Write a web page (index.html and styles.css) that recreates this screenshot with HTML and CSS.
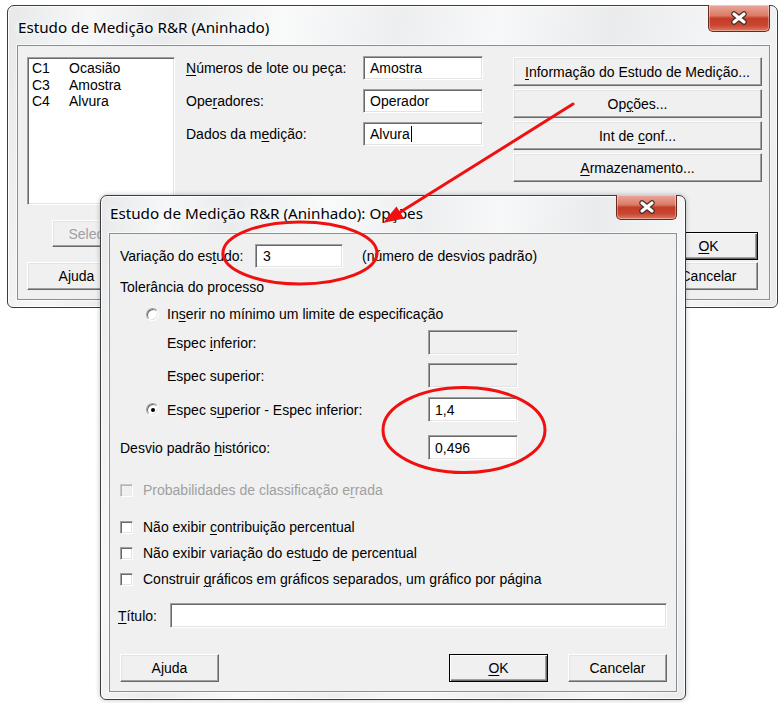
FILE: index.html
```html
<!DOCTYPE html>
<html>
<head>
<meta charset="utf-8">
<title>Estudo de Medição R&amp;R (Aninhado)</title>
<link rel="stylesheet" href="styles.css">
</head>
<body>
<div class="desk">

  <div class="win win-main">
    <div class="titlebar">
      <span class="title">Estudo de Medição R&amp;R (Aninhado)</span>
      <div class="close close-main">
        <svg width="20" height="14" viewBox="0 0 20 14"><path d="M5 3 L15 11 M15 3 L5 11" stroke="#4a2a24" stroke-width="5.5" stroke-linecap="round"/><path d="M5 3 L15 11 M15 3 L5 11" stroke="#fff" stroke-width="3.2" stroke-linecap="round"/></svg>
      </div>
    </div>
    <div class="client client-main">
      <div class="top">
        <div class="listbox">
          <div class="li"><span class="lc">C1</span><span>Ocasião</span></div>
          <div class="li"><span class="lc">C3</span><span>Amostra</span></div>
          <div class="li"><span class="lc">C4</span><span>Alvura</span></div>
        </div>
        <div class="fields">
          <div class="frow"><span class="flabel"><u>N</u>úmeros de lote ou peça:</span><span class="input w120">Amostra</span></div>
          <div class="frow"><span class="flabel">Ope<u>r</u>adores:</span><span class="input w120">Operador</span></div>
          <div class="frow"><span class="flabel">Dados da m<u>e</u>dição:</span><span class="input w120">Alvura<span class="caret"></span></span></div>
        </div>
        <div class="btncol">
          <div class="btn bwide"><span><u>I</u>nformação do Estudo de Medição...</span></div>
          <div class="btn bwide"><span>Op<u>ç</u>ões...</span></div>
          <div class="btn bwide"><span>Int de <u>c</u>onf...</span></div>
          <div class="btn bwide"><span><u>A</u>rmazenamento...</span></div>
        </div>
      </div>
      <div class="bottom">
        <div class="bcol-left">
          <div class="btn b99 bsel dis"><span>Selecionar</span></div>
          <div class="btn b99 bh28"><span>Ajuda</span></div>
        </div>
        <div class="bcol-right">
          <div class="btn b99 bh28 def"><span><u>O</u>K</span></div>
          <div class="btn b99 bh28"><span>Cancelar</span></div>
        </div>
      </div>
    </div>
  </div>

  <div class="win win-opts">
    <div class="titlebar">
      <span class="title">Estudo de Medição R&amp;R (Aninhado): Opções</span>
      <div class="close close-opts">
        <svg width="20" height="14" viewBox="0 0 20 14"><path d="M5 3 L15 11 M15 3 L5 11" stroke="#4a2a24" stroke-width="5.5" stroke-linecap="round"/><path d="M5 3 L15 11 M15 3 L5 11" stroke="#fff" stroke-width="3.2" stroke-linecap="round"/></svg>
      </div>
    </div>
    <div class="client client-opts">
      <div class="row r-var">
        <span class="lab-var">Variação do es<u>t</u>udo:</span>
        <span class="input w88">3</span>
        <span class="hint">(número de desvios padrão)</span>
      </div>
      <div class="row r-tol"><span>Tolerância do processo</span></div>
      <div class="row r-rad1">
        <span class="radio"></span>
        <span class="rlabel">In<u>s</u>erir no mínimo um limite de especificação</span>
      </div>
      <div class="row r-spec r-inf">
        <span class="lab-spec">Espec <u>i</u>nferior:</span>
        <span class="input w90 disabled"></span>
      </div>
      <div class="row r-spec r-sup">
        <span class="lab-spec">Espec superior:</span>
        <span class="input w90 disabled"></span>
      </div>
      <div class="row r-rad2">
        <span class="radio checked"></span>
        <span class="rlabel lab-rad2">Espec s<u>u</u>perior - Espec inferior:</span>
        <span class="input w90">1,4</span>
      </div>
      <div class="row r-desv">
        <span class="lab-desv">Desvio padrão <u>h</u>istórico:</span>
        <span class="input w90">0,496</span>
      </div>
      <div class="row r-chk r-prob">
        <span class="chk dis"></span>
        <span class="clabel dis-text">Probabilidades de classificação e<u>r</u>rada</span>
      </div>
      <div class="row r-chk r-c1">
        <span class="chk"></span>
        <span class="clabel">Não exibir <u>c</u>ontribuição percentual</span>
      </div>
      <div class="row r-chk r-c2">
        <span class="chk"></span>
        <span class="clabel">Não exibir variação do estu<u>d</u>o de percentual</span>
      </div>
      <div class="row r-chk r-c2">
        <span class="chk"></span>
        <span class="clabel">Construir <u>g</u>ráficos em gráficos separados, um gráfico por página</span>
      </div>
      <div class="row r-tit">
        <span class="lab-tit"><u>T</u>ítulo:</span>
        <span class="input w497"></span>
      </div>
      <div class="row r-btns">
        <div class="btn b99 bh28"><span>Ajuda</span></div>
        <div class="btn-right">
          <div class="btn b99 bh28 def"><span><u>O</u>K</span></div>
          <div class="btn b99 bh28"><span>Cancelar</span></div>
        </div>
      </div>
    </div>
  </div>

  <svg class="annot" width="783" height="703" viewBox="0 0 783 703">
    <line x1="573" y1="104" x2="394" y2="216" stroke="#f01010" stroke-width="3" stroke-linecap="round"/>
    <polygon points="383,223 404,218.5 396.5,206.5" fill="#f01010"/>
    <ellipse cx="300" cy="253" rx="77" ry="31" fill="none" stroke="#f01010" stroke-width="3"/>
    <ellipse cx="464" cy="430" rx="81" ry="42.5" fill="none" stroke="#f01010" stroke-width="3"/>
  </svg>

</div>
</body>
</html>
```

FILE: styles.css
```css
* { box-sizing: border-box; }
html, body { margin: 0; background: #ffffff; }
body {
  font-family: "Liberation Sans", Arial, sans-serif;
  font-size: 14px;
  color: #000;
}
u { text-decoration: underline; text-underline-offset: 2px; text-decoration-thickness: 1px; }

.desk { position: relative; width: 783px; height: 703px; overflow: hidden; }

/* window frames */
.win {
  position: absolute;
  display: flex;
  flex-direction: column;
  border: 1px solid #3c3c3c;
  border-radius: 7px 7px 6px 6px;
  background: linear-gradient(100deg, #e6e8ea 0%, #f6f7f8 10%, #e9ebed 20%, #f9fafa 34%, #eceef0 48%, #f7f8f9 60%, #e9ebed 74%, #f5f6f7 88%, #e8eaec 100%);
  box-shadow: inset 0 0 0 1px rgba(255,255,255,0.85);
}
.win-main { left: 7px; top: 5px; width: 771px; height: 303px; padding: 0 7px 7px 9px; }
.win-opts { left: 100px; top: 195px; width: 586px; height: 505px; padding: 0 8px 7px 8px; z-index: 2; box-shadow: inset 0 0 0 1px rgba(255,255,255,0.85), 0 0 5px rgba(0,0,0,0.25); }

.titlebar { flex: none; display: flex; justify-content: space-between; align-items: flex-start; }
.win-main .titlebar { height: 39px; }
.win-opts .titlebar { height: 37px; }
.title {
  font-family: "Noto Sans", "Open Sans", sans-serif;
  font-size: 15.2px;
  line-height: 20px;
  margin-left: 1px;
  color: #000;
  text-shadow: 0 0 6px #fff, 0 0 10px #fff;
}
.win-main .title { margin-top: 11px; }
.win-opts .title { margin-top: 7px; }

.close {
  display: flex;
  align-items: center;
  justify-content: center;
  margin-top: -1px;
  border: 1px solid #6a2a20;
  border-top: none;
  border-radius: 0 0 5px 5px;
  background: linear-gradient(#eaa99b 0%, #dc7b67 40%, #c43d27 52%, #c84632 78%, #df7a5d 100%);
  box-shadow: inset 0 0 0 1px rgba(255,255,255,0.35);
}
.close-main { width: 62px; height: 27px; }
.close-opts { width: 61px; height: 25px; }

.client {
  flex: 1;
  background: #f0f0f0;
  border: 1px solid #8b8e92;
  box-shadow: 0 0 0 1px rgba(255,255,255,0.6);
}

/* 3D controls */
.input {
  display: flex;
  align-items: center;
  height: 24px;
  padding-left: 6px;
  background: #fff;
  border: 1px solid;
  border-color: #a0a0a0 #ffffff #ffffff #a0a0a0;
  box-shadow: inset 1px 1px 0 #696969, inset -1px -1px 0 #e3e3e3;
  white-space: nowrap;
}
.input.disabled { background: #f0f0f0; }
.caret { display: inline-block; width: 1px; height: 16px; background: #000; margin-left: 1px; }
.w120 { width: 120px; }
.w88 { width: 88px; padding-left: 7px; }
.w90 { width: 90px; height: 25px; padding-left: 6px; flex: none; }
.w497 { width: 497px; height: 25px; }

.btn {
  display: flex;
  align-items: center;
  justify-content: center;
  background: #f0f0f0;
  border: 1px solid;
  border-color: #ffffff #696969 #696969 #ffffff;
  box-shadow: inset -1px -1px 0 #a0a0a0, inset 1px 1px 0 #e3e3e3;
  white-space: nowrap;
}
.btn.def {
  border-color: #000;
  box-shadow: inset 1px 1px 0 #fff, inset -1px -1px 0 #696969, inset -2px -2px 0 #a0a0a0;
}
.btn.dis { color: #a0a0a0; }
.bwide { width: 249px; height: 29px; }
.b99 { width: 99px; }
.bh28 { height: 28px; }
.bsel { height: 27px; margin-left: 25px; }

/* main dialog */
.client-main { display: flex; flex-direction: column; padding: 10px 0 9px 0; }
.top { display: flex; align-items: flex-start; padding-left: 9px; }
.listbox {
  width: 148px;
  height: 148px;
  margin-top: 1px;
  padding: 2px 3px;
  background: #fff;
  border: 1px solid;
  border-color: #a0a0a0 #ffffff #ffffff #a0a0a0;
  box-shadow: inset 1px 1px 0 #696969, inset -1px -1px 0 #e3e3e3;
  line-height: 16.5px;
}
.li { display: flex; padding-left: 1px; }
.lc { width: 37px; }
.fields { display: flex; flex-direction: column; gap: 9px; margin-left: 11px; }
.frow { display: flex; align-items: center; height: 24px; }
.flabel { width: 177px; white-space: nowrap; }
.btncol { display: flex; flex-direction: column; gap: 3px; margin-left: 30px; margin-top: 1px; }

.bottom { display: flex; justify-content: space-between; align-items: flex-end; margin-top: 15px; }
.bcol-left { display: flex; flex-direction: column; gap: 15px; padding-left: 9px; }
.bcol-right { display: flex; flex-direction: column; gap: 2px; padding-right: 11px; }

/* options dialog */
.client-opts { display: flex; flex-direction: column; }
.row { display: flex; align-items: center; white-space: nowrap; }
.r-var { margin-top: 10px; height: 24px; padding-left: 10px; }
.lab-var { width: 135px; }
.hint { margin-left: 19px; }
.r-tol { margin-top: 11px; height: 16px; padding-left: 10px; }
.r-rad1 { margin-top: 11px; height: 16px; padding-left: 36px; }
.radio {
  position: relative;
  width: 13px;
  height: 13px;
  border-radius: 50%;
  background: #fff;
  border: 1px solid;
  border-color: #a0a0a0 #ffffff #ffffff #a0a0a0;
  box-shadow: inset 1px 1px 0 #696969, inset -1px -1px 0 #e3e3e3;
  flex: none;
}
.radio.checked::after {
  content: "";
  position: absolute;
  left: 3.5px;
  top: 3.5px;
  width: 4px;
  height: 4px;
  border-radius: 50%;
  background: #000;
}
.rlabel { margin-left: 8px; }
.r-spec { height: 25px; padding-left: 57px; }
.r-inf { margin-top: 8px; }
.r-sup { margin-top: 8px; }
.lab-spec { width: 261px; }
.r-rad2 { margin-top: 9px; height: 25px; padding-left: 36px; }
.lab-rad2 { width: 261px; flex: none; }
.r-desv { margin-top: 13px; height: 25px; padding-left: 10px; }
.lab-desv { width: 308px; }
.r-chk { height: 16px; padding-left: 10px; }
.r-prob { margin-top: 22px; }
.r-c1 { margin-top: 21px; }
.r-c2 { margin-top: 10px; }
.chk {
  width: 13px;
  height: 13px;
  background: #fff;
  border: 1px solid;
  border-color: #a0a0a0 #ffffff #ffffff #a0a0a0;
  box-shadow: inset 1px 1px 0 #696969, inset -1px -1px 0 #e3e3e3;
  flex: none;
}
.chk.dis { background: #f0f0f0; border-color: #c8c8c8 #fff #fff #c8c8c8; box-shadow: inset 1px 1px 0 #b4b4b4, inset -1px -1px 0 #ececec; }
.clabel { margin-left: 10px; }
.dis-text { color: #a0a0a0; }
.r-tit { margin-top: 16px; height: 25px; padding-left: 8px; }
.lab-tit { width: 52px; }
.r-btns { margin-top: 26px; height: 28px; padding-left: 10px; justify-content: space-between; padding-right: 9px; }
.btn-right { display: flex; gap: 20px; }

.annot { position: absolute; left: 0; top: 0; z-index: 10; pointer-events: none; }
```
